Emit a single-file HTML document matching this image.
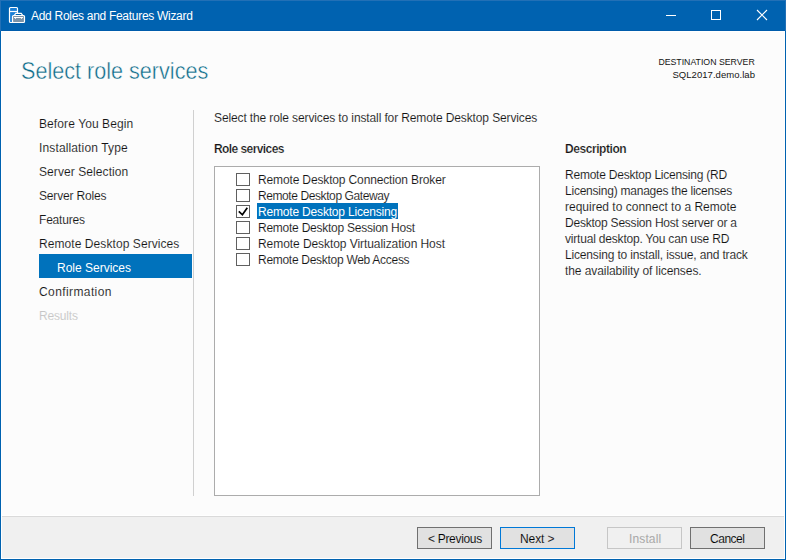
<!DOCTYPE html>
<html><head><meta charset="utf-8">
<style>
*{box-sizing:border-box;margin:0;padding:0}
html,body{width:786px;height:560px;overflow:hidden;background:#fcfcfc}
body{font-family:"Liberation Sans",sans-serif;font-size:12px;color:#141414;position:relative}
.a{position:absolute;white-space:nowrap;line-height:16px;-webkit-text-stroke:0.1px #fcfcfc}
.r{position:absolute}
#tb{left:0;top:0;width:786px;height:31px;background:#0062b0}
#title{color:#fff;font-size:12px;left:31px;top:8px;-webkit-text-stroke:0}
#h1{left:21px;top:56px;font-size:24px;line-height:30px;color:#0b6a88;-webkit-text-stroke:0.45px #fcfcfc}
.dest{font-size:9.5px;line-height:14px;-webkit-text-stroke:0}
.nav{left:39px}
#sel{left:39px;top:254px;width:153px;height:24px;background:#0072bc}
#vline{left:193px;top:110px;width:1px;height:386px;background:#d0d0d0}
#lb{left:214px;top:166px;width:326px;height:330px;border:1px solid #acacac;background:#fff}
.cb{position:absolute;left:236px;width:14px;height:13px;border:1px solid #606060;background:#fff}
.item{left:258px}
.btn{position:absolute;top:527px;width:75px;height:22px;border:1px solid #707070;background:#e1e1e1}
.bt{color:#000;-webkit-text-stroke:0.1px #e1e1e1}
</style></head><body>
<!-- window frame -->
<div class="r" style="left:0;top:0;width:786px;height:560px;background:#0062b0"></div>
<div class="r" style="left:1px;top:31px;width:784px;height:528px;background:#fff"></div>
<div class="r" style="left:2px;top:32px;width:782px;height:483px;background:#fcfcfc"></div>
<div class="r" style="left:2px;top:516px;width:782px;height:1px;background:#dadada"></div>
<div class="r" style="left:2px;top:517px;width:782px;height:41px;background:#f0f0f0"></div>
<div class="r" id="tb"></div>
<div class="r" style="left:0;top:0;width:786px;height:1px;background:#2270b6"></div>
<div class="r" style="left:0;top:0;width:1px;height:31px;background:#2270b6"></div>
<div class="r" style="left:785px;top:0;width:1px;height:31px;background:#2270b6"></div>
<div class="r" style="left:1px;top:30px;width:784px;height:1px;background:#005cab"></div>

<svg class="r" style="left:0;top:0" width="30" height="30" viewBox="0 0 30 30">
<rect x="9.5" y="7.5" width="8" height="15" rx="1" fill="#1a7fd6" stroke="#fff" stroke-width="1.2"/>
<line x1="9.5" y1="11.5" x2="17.5" y2="11.5" stroke="#fff" stroke-width="1.2"/>
<path d="M14.2 15.5 L15.8 13.4 L21.2 13.4 L22.8 15.5" fill="#0062b0" stroke="#fff" stroke-width="1.2"/>
<rect x="12.5" y="15.5" width="12" height="7" rx="1" fill="#7b93a8" stroke="#fff" stroke-width="1.2"/>
<path d="M14 17.5 H23 M15.5 17.5 V18.8 M21.5 17.5 V18.8" stroke="#fff" stroke-width="1.1" fill="none"/>
</svg>
<svg class="r" style="left:640px;top:0" width="146" height="30" viewBox="640 0 146 30">
<rect x="666" y="15" width="10" height="1" fill="#fff"/>
<rect x="711.5" y="10.5" width="9" height="9" fill="none" stroke="#fff" stroke-width="1"/>
<path d="M757 10 L767 20 M767 10 L757 20" stroke="#fff" stroke-width="1.1" fill="none"/>
</svg>
<div class="a" id="title" style=";letter-spacing:-0.293px">Add Roles and Features Wizard</div>

<div class="a" id="h1" style="transform:scaleX(0.9);transform-origin:0 0">Select role services</div>
<div class="a dest" id="dest1" style="right:31px;top:55px;transform:scaleX(0.92);transform-origin:100% 0">DESTINATION SERVER</div>
<div class="a dest" id="dest2" style="right:31px;top:68px;letter-spacing:0.04px">SQL2017.demo.lab</div>

<div class="r" id="sel"></div>
<div class="a nav" id="n1" style="top:116px;letter-spacing:0.094px">Before You Begin</div>
<div class="a nav" id="n2" style="top:140px;letter-spacing:0.137px">Installation Type</div>
<div class="a nav" id="n3" style="top:164px;letter-spacing:0.08px">Server Selection</div>
<div class="a nav" id="n4" style="top:188px;letter-spacing:-0.163px">Server Roles</div>
<div class="a nav" id="n5" style="top:212px;letter-spacing:-0.2px">Features</div>
<div class="a nav" id="n6" style="top:236px;letter-spacing:0.073px">Remote Desktop Services</div>
<div class="a nav" id="n7" style="top:260px;left:57px;color:#fff;-webkit-text-stroke:0">Role Services</div>
<div class="a nav" id="n8" style="top:284px;letter-spacing:0.4px">Confirmation</div>
<div class="a nav" id="n9" style="top:308px;color:#c6c6c6;letter-spacing:-0.167px">Results</div>
<div class="r" id="vline"></div>

<div class="a" id="instr" style="left:214px;top:110px;letter-spacing:-0.121px">Select the role services to install for Remote Desktop Services</div>
<div class="a" id="rs" style="left:214px;top:141px;font-weight:bold;-webkit-text-stroke:0.2px #fcfcfc;letter-spacing:-0.575px">Role services</div>
<div class="r" id="lb"></div>
<div class="cb" style="top:173px"></div>
<div class="cb" style="top:189px"></div>
<div class="cb" style="top:205px"></div>
<div class="cb" style="top:221px"></div>
<div class="cb" style="top:237px"></div>
<div class="cb" style="top:253px"></div>
<svg class="r" style="left:230px;top:200px" width="24" height="24" viewBox="230 200 24 24"><path d="M238.8 211.4 L242.4 214.8 L247.3 207.8" stroke="#000" stroke-width="1.7" fill="none" stroke-linecap="butt" stroke-linejoin="miter"/></svg>
<div class="a item" id="i1" style="top:172px;letter-spacing:-0.142px">Remote Desktop Connection Broker</div>
<div class="a item" id="i2" style="top:188px;letter-spacing:-0.409px">Remote Desktop Gateway</div>
<div class="r" style="left:257px;top:203px;width:141px;height:16px;background:#0072bc"></div>
<div class="a item" id="i3" style="top:204px;color:#fff;-webkit-text-stroke:0;letter-spacing:-0.18px">Remote Desktop Licensing</div>
<div class="a item" id="i4" style="top:220px;letter-spacing:-0.246px">Remote Desktop Session Host</div>
<div class="a item" id="i5" style="top:236px;letter-spacing:-0.067px">Remote Desktop Virtualization Host</div>
<div class="a item" id="i6" style="top:252px;letter-spacing:-0.288px">Remote Desktop Web Access</div>

<div class="a" id="dh" style="left:565px;top:141px;font-weight:bold;-webkit-text-stroke:0.2px #fcfcfc;letter-spacing:-0.44px">Description</div>
<div class="a" id="d1" style="left:565px;top:167px;letter-spacing:-0.222px">Remote Desktop Licensing (RD</div>
<div class="a" id="d2" style="left:565px;top:183px;letter-spacing:-0.23px">Licensing) manages the licenses</div>
<div class="a" id="d3" style="left:565px;top:199px">required to connect to a Remote</div>
<div class="a" id="d4" style="left:565px;top:215px;letter-spacing:-0.219px">Desktop Session Host server or a</div>
<div class="a" id="d5" style="left:565px;top:231px;letter-spacing:-0.193px">virtual desktop. You can use RD</div>
<div class="a" id="d6" style="left:565px;top:247px;letter-spacing:-0.163px">Licensing to install, issue, and track</div>
<div class="a" id="d7" style="left:565px;top:263px;letter-spacing:-0.075px">the availability of licenses.</div>

<div class="btn" style="left:417px"></div>
<div class="btn" style="left:500px;border-color:#0078d7"></div>
<div class="btn" style="left:607px;background:#f0f0f0;border-color:#c6c6c6"></div>
<div class="btn" style="left:690px"></div>
<div class="a bt" id="b1" style="left:428px;top:531px;letter-spacing:-0.311px">&lt; Previous</div>
<div class="a bt" id="b2" style="left:520px;top:531px;letter-spacing:-0.08px">Next &gt;</div>
<div class="a bt" id="b3" style="left:629px;top:531px;color:#a0a0a0;letter-spacing:0.133px">Install</div>
<div class="a bt" id="b4" style="left:710px;top:531px;letter-spacing:-0.48px">Cancel</div>
</body></html>
